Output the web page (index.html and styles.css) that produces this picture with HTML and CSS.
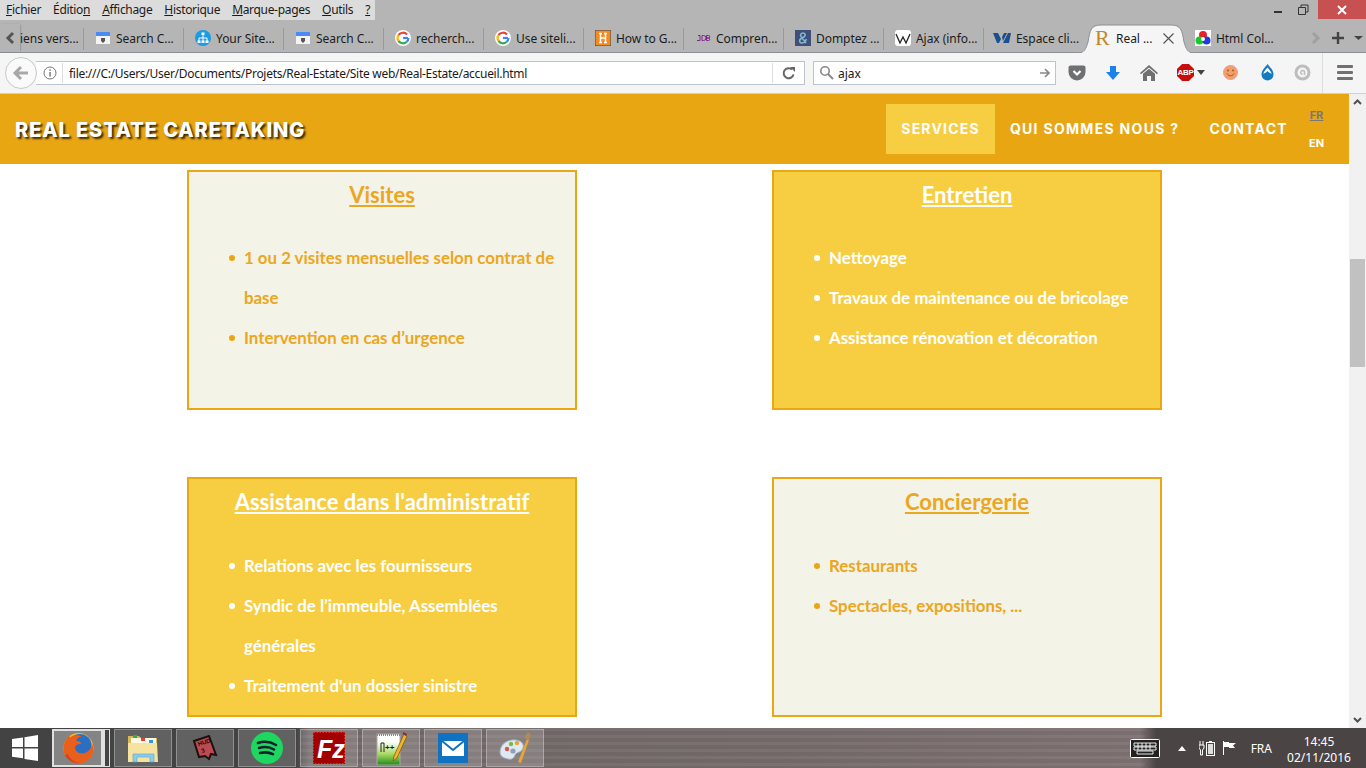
FILE: index.html
```html
<!DOCTYPE html>
<html lang="fr">
<head>
<meta charset="utf-8">
<title>Real Estate Caretaking</title>
<link rel="stylesheet" href="styles.css">
</head>
<body>
<div class="window">
  <div class="titlebar">
    <div class="menubar">
      <span><u>F</u>ichier</span><span>Éditio<u>n</u></span><span><u>A</u>ffichage</span><span><u>H</u>istorique</span><span><u>M</u>arque-pages</span><span><u>O</u>utils</span><span><u>?</u></span>
    </div>
    <div class="winctl">
      <svg class="ctl" width="20" height="20" viewBox="0 0 20 20"><rect x="6" y="11" width="8" height="2" fill="#333"/></svg>
      <svg class="ctl" width="20" height="20" viewBox="0 0 20 20"><path d="M5.500 7.500h7v7h-7zM8 7V5h7v7h-2" fill="none" stroke="#333" stroke-width="1"/></svg>
      <div class="close"><svg width="12" height="12" viewBox="0 0 12 12"><path d="M2 2l8 8M10 2l-8 8" stroke="#fff" stroke-width="2"/></svg></div>
    </div>
  </div>

  <div class="tabstrip">
    <svg class="tabarrow" width="20" height="28" viewBox="0 0 20 28"><path d="M13 9l-5 5 5 5" fill="none" stroke="#555" stroke-width="3"/></svg>
    <div class="tab first"><span>iens vers...</span></div>
    <div class="tab"><svg class="fav" viewBox="0 0 16 16"><rect x="1" y="2" width="14" height="12" fill="#f3f3f3"/><rect x="1" y="2" width="14" height="4" fill="#4a8af4"/><path d="M6 8v3l2 2 2-2V8" fill="#555"/></svg><span>Search C...</span></div>
    <div class="tab"><svg class="fav" viewBox="0 0 16 16"><rect width="16" height="16" rx="8" fill="#1a9be6"/><path d="M8 4v3M4 11V8h8v3M8 7v4" stroke="#fff" fill="none"/><rect x="6.500" y="2.500" width="3" height="2.500" fill="#fff"/><rect x="2.500" y="10.500" width="3" height="2.500" fill="#fff"/><rect x="6.500" y="10.500" width="3" height="2.500" fill="#fff"/><rect x="10.500" y="10.500" width="3" height="2.500" fill="#fff"/></svg><span>Your Site...</span></div>
    <div class="tab"><svg class="fav" viewBox="0 0 16 16"><rect x="1" y="2" width="14" height="12" fill="#f3f3f3"/><rect x="1" y="2" width="14" height="4" fill="#4a8af4"/><path d="M6 8v3l2 2 2-2V8" fill="#555"/></svg><span>Search C...</span></div>
    <div class="tab"><svg class="fav" viewBox="0 0 16 16"><circle cx="8" cy="8" r="8" fill="#fff"/><path d="M13 8H8" stroke="#4285f4" stroke-width="2.200"/><path d="M12 4.500A5.500 5.500 0 0 0 3.500 5" fill="none" stroke="#ea4335" stroke-width="2.200"/><path d="M3.500 5a5.500 5.500 0 0 0 0 6" fill="none" stroke="#fbbc05" stroke-width="2.200"/><path d="M3.500 11a5.500 5.500 0 0 0 8 1" fill="none" stroke="#34a853" stroke-width="2.200"/><path d="M11.500 12A5.500 5.500 0 0 0 13.500 8" fill="none" stroke="#4285f4" stroke-width="2.200"/></svg><span>recherch...</span></div>
    <div class="tab"><svg class="fav" viewBox="0 0 16 16"><circle cx="8" cy="8" r="8" fill="#fff"/><path d="M13 8H8" stroke="#4285f4" stroke-width="2.200"/><path d="M12 4.500A5.500 5.500 0 0 0 3.500 5" fill="none" stroke="#ea4335" stroke-width="2.200"/><path d="M3.500 5a5.500 5.500 0 0 0 0 6" fill="none" stroke="#fbbc05" stroke-width="2.200"/><path d="M3.500 11a5.500 5.500 0 0 0 8 1" fill="none" stroke="#34a853" stroke-width="2.200"/><path d="M11.500 12A5.500 5.500 0 0 0 13.500 8" fill="none" stroke="#4285f4" stroke-width="2.200"/></svg><span>Use siteli...</span></div>
    <div class="tab"><svg class="fav" viewBox="0 0 16 16"><rect width="16" height="16" fill="#f58a1f" stroke="#2b4a6b"/><path d="M4 3.500h3M9 3.500h3M5.500 3.500v9M10.500 3.500v9M4 12.500h3M9 12.500h3M5.500 8h5" stroke="#fff" stroke-width="1.500" fill="none"/></svg><span>How to G...</span></div>
    <div class="tab"><svg class="fav" viewBox="0 0 16 16"><path d="M3 5.500h2v5H2M7 5.500v5h1.500a2.500 2.500 0 0 0 0-5zM11.500 5.500v5h2a1.200 1.200 0 0 0 0-2.500h-2 2a1.200 1.200 0 0 0 0-2.500z" fill="none" stroke="#7a1a8c" stroke-width="0.900"/></svg><span>Compren...</span></div>
    <div class="tab"><svg class="fav" viewBox="0 0 16 16"><rect width="16" height="16" fill="#3e4f7c"/><path d="M11 13L6 6.500C5 5 6 3 8 3s3 2 1.500 3.500L5.500 9c-2 1.500-.5 4 1.500 4s3.500-1.500 4.500-4" fill="none" stroke="#86b6c9" stroke-width="1.600"/></svg><span>Domptez ...</span></div>
    <div class="tab"><svg class="fav" viewBox="0 0 16 16"><rect width="16" height="16" rx="3" fill="#fff"/><path d="M1 4l4 9 3-6 3 6 4-9" fill="none" stroke="#222" stroke-width="1.300"/></svg><span>Ajax (info...</span></div>
    <div class="tab short"><svg class="fav wide" viewBox="0 0 18 12"><path d="M0 1h5l3 6-2 4H4zM10 11l5-10h3l-2 10zM9 5l2-4h3l-4 8z" fill="#1c4f8f"/></svg><span>Espace cli...</span></div>
    <div class="tab active">
      <svg class="tabshape" viewBox="0 0 116 29"><path d="M0 29c6 0 8-4 10-11C12 6 13 1 23 1h70c10 0 11 5 13 17 2 7 4 11 10 11" fill="#f5f5f5" stroke="#8a8f96"/></svg>
      <span class="r">R</span><span class="atitle">Real ...</span>
      <svg class="x" width="11" height="11" viewBox="0 0 11 11"><path d="M.5.5l10 10M10.500.5l-10 10" stroke="#555" stroke-width="1.200"/></svg>
    </div>
    <div class="tab last"><svg class="fav" viewBox="0 0 16 16"><rect width="16" height="16" fill="#fff"/><circle cx="8" cy="5" r="4" fill="#e8212b"/><circle cx="4.500" cy="10.500" r="4" fill="#19c92c"/><circle cx="11.500" cy="10.500" r="4" fill="#2039e0"/><circle cx="8" cy="9" r="2" fill="#fff"/></svg><span>Html Col...</span></div>
    <div class="stripctl">
      <svg width="20" height="28" viewBox="0 0 20 28"><path d="M8 9l5 5-5 5" fill="none" stroke="#a0a0a0" stroke-width="3"/></svg>
      <svg width="26" height="28" viewBox="0 0 26 28"><path d="M13 8v12M7 14h12" stroke="#444" stroke-width="2.400"/></svg>
      <svg width="16" height="28" viewBox="0 0 16 28"><path d="M3 12h9l-4.500 4z" fill="#444"/></svg>
    </div>
  </div>

  <div class="toolbar">
    <div class="back"><svg width="18" height="18" viewBox="0 0 18 18"><path d="M9 3L3 9l6 6M3 9h13" fill="none" stroke="#a8a8a8" stroke-width="3"/></svg></div>
    <div class="urlbar">
      <svg class="info" width="14" height="14" viewBox="0 0 14 14"><circle cx="7" cy="7" r="6" fill="none" stroke="#777"/><rect x="6.300" y="6" width="1.500" height="4.500" fill="#777"/><rect x="6.300" y="3.300" width="1.500" height="1.500" fill="#777"/></svg>
      <span class="url">file:///C:/Users/User/Documents/Projets/Real-Estate/Site web/Real-Estate/accueil.html</span>
      <span class="reload"><svg width="14" height="14" viewBox="0 0 14 14"><path d="M11.500 8.500A5 5 0 1 1 10 3.500" fill="none" stroke="#666" stroke-width="2"/><path d="M8 1h5v5z" fill="#666"/></svg></span>
    </div>
    <div class="search">
      <svg width="16" height="16" viewBox="0 0 16 16"><circle cx="6" cy="6" r="4.200" fill="none" stroke="#888" stroke-width="1.600"/><path d="M9 9l5 5" stroke="#888" stroke-width="2"/></svg>
      <span class="query">ajax</span>
      <svg class="go" width="12" height="12" viewBox="0 0 12 12"><path d="M6 2l4 4-4 4M10 6H1" fill="none" stroke="#888" stroke-width="1.700"/></svg>
    </div>
    <div class="tools">
      <svg width="18" height="18" viewBox="0 0 18 18"><path d="M2.500 1.500h13a2 2 0 0 1 2 2V8a8.500 8.500 0 0 1-17 0V3.500a2 2 0 0 1 2-2z" fill="#6f7073"/><path d="M5.500 7L9 10.500 12.500 7" fill="none" stroke="#fff" stroke-width="2.200"/></svg>
      <svg width="16" height="16" viewBox="0 0 16 16"><path d="M5 1h6v6h4l-7 8-7-8h4z" fill="#1e81e8"/></svg>
      <svg width="18" height="16" viewBox="0 0 18 16"><path d="M9 0l9 8-1 1.200L9 2.500 1 9.200 0 8z" fill="#707070"/><path d="M9 3.800l6 5V16h-4v-5H7v5H3V8.800z" fill="#707070"/></svg>
      <div class="abp">
        <div class="abpicon">ABP</div>
        <svg width="8" height="5" viewBox="0 0 8 5"><path d="M0 0h8L4 5z" fill="#444"/></svg>
      </div>
      <svg width="15" height="15" viewBox="0 0 15 15"><circle cx="7.500" cy="7.500" r="7" fill="#f2a06a" stroke="#e89a9a"/><path d="M4 8.500c1.500 3 5.500 3 7 0" fill="none" stroke="#a84f1c"/><circle cx="5" cy="5.500" r=".9" fill="#a84f1c"/><circle cx="10" cy="5.500" r=".9" fill="#a84f1c"/></svg>
      <svg width="13" height="17" viewBox="0 0 13 17"><path d="M6.500 0c2 3 6 6 6 10.500a6 6 0 0 1-12 0C.5 6 4.500 3 6.500 0z" fill="#157bc1"/><path d="M6.500 3.500c-1 1.500-4 4-4 6.500 1-1 3-1.500 4-3 1 1.500 3 2 4 3 0-2.500-3-5-4-6.500z" fill="#fff"/></svg>
      <svg width="17" height="17" viewBox="0 0 17 17"><circle cx="8.500" cy="8.500" r="6.500" fill="none" stroke="#bdbdbd" stroke-width="3"/><path d="M10.500 11V7.500a2 2 0 1 0-2 3" fill="none" stroke="#bdbdbd" stroke-width="1.500"/></svg>
    </div>
    <div class="hamburger"><i></i><i></i><i></i></div>
  </div>

  <div class="viewport">
    <div class="page">
      <header class="header">
        <div class="logo">REAL ESTATE CARETAKING</div>
        <nav class="nav">
          <a class="link current">SERVICES</a>
          <a class="link">QUI SOMMES NOUS ?</a>
          <a class="link">CONTACT</a>
          <div class="langs"><a class="fr">FR</a><a class="en">EN</a></div>
        </nav>
      </header>
      <main class="cards">
        <section class="card cream">
          <h2>Visites</h2>
          <ul>
            <li>1 ou 2 visites mensuelles selon contrat de base</li>
            <li>Intervention en cas d’urgence</li>
          </ul>
        </section>
        <section class="card yellow">
          <h2>Entretien</h2>
          <ul>
            <li>Nettoyage</li>
            <li>Travaux de maintenance ou de bricolage</li>
            <li>Assistance rénovation et décoration</li>
          </ul>
        </section>
        <section class="card yellow">
          <h2>Assistance dans l'administratif</h2>
          <ul>
            <li>Relations avec les fournisseurs</li>
            <li>Syndic de l’immeuble, Assemblées générales</li>
            <li>Traitement d'un dossier sinistre</li>
          </ul>
        </section>
        <section class="card cream">
          <h2>Conciergerie</h2>
          <ul>
            <li>Restaurants</li>
            <li>Spectacles, expositions, ...</li>
          </ul>
        </section>
      </main>
    </div>
    <div class="scrollbar">
      <svg width="17" height="17" viewBox="0 0 17 17"><path d="M5 10l3.500-3.500L12 10" fill="none" stroke="#505050" stroke-width="2"/></svg>
      <div class="thumb"></div>
      <svg width="17" height="17" viewBox="0 0 17 17"><path d="M5 7l3.500 3.500L12 7" fill="none" stroke="#505050" stroke-width="2"/></svg>
    </div>
  </div>

  <footer class="taskbar">
    <div class="start"><svg width="26" height="26" viewBox="0 0 26 26"><path d="M0 4l11-1.500V12H0zM12.500 2.300L26 0v12H12.500zM0 13.500h11v9.800L0 21.800zM12.500 13.500H26V26l-13.500-2z" fill="#fff"/></svg></div>
    <div class="taskbtn open">
      <svg width="32" height="32" viewBox="0 0 32 32"><circle cx="16.500" cy="16" r="15" fill="#f7b52d"/><circle cx="18" cy="13.500" r="11.500" fill="#2a6fc4"/><path d="M7 4C3 8 1.500 12 1.500 17a15 15 0 0 0 29.500 3.500c.7-3.500.2-6.500-1-9 0 3.500-2 6.500-5 8.500-3.500 2.200-8.500 1.800-11-1.500-1.800-2.500-.8-5.200 1.500-6l4-1c-1-2-3-2.500-5-2.200C14 7 16.500 5 20 4.200 15 2.500 10 3 8.500 5.500z" fill="#e8601c"/><path d="M3 23c3 6 9 8.500 15 8-5-.5-10-3.500-12-9z" fill="#d9411e"/></svg>
    </div>
    <div class="stack"></div>
    <div class="taskbtn">
      <svg width="32" height="32" viewBox="0 0 32 32"><path d="M1 4h11l2 2h16v24H1z" fill="#d9b858"/><path d="M4 6h25v5H4z" fill="#fff8e0"/><rect x="6" y="3" width="4" height="3" fill="#2cb04a"/><rect x="14" y="6" width="4" height="3" fill="#d8453a"/><rect x="22" y="8" width="4" height="3" fill="#2a9bd8"/><path d="M1 11h29l1 19H1z" fill="#f6e3a0"/><path d="M6 22h21v8h-4v-5H10v5H6z" fill="#8ccbea" stroke="#5aa5cf" stroke-width=".6"/></svg>
    </div>
    <div class="taskbtn">
      <svg width="26" height="26" viewBox="0 0 26 26"><path d="M2 6l15-5 3 8 4 11-5-1-2 5-4-3-6 1z" fill="#bd4a50" stroke="#1c1010" stroke-width="2"/><text x="6.500" y="11" class="svgtext" font-size="6" transform="rotate(-17 6.500 11)">HUD</text><text x="10" y="18" class="svgtext" font-size="6" transform="rotate(-17 10 18)">3</text></svg>
    </div>
    <div class="taskbtn"><svg width="32" height="32" viewBox="0 0 32 32"><circle cx="16" cy="16" r="16" fill="#1ed760"/><path d="M7 11c6-2 13-1 18 2M8 16c5-1.500 11-1 15 1.500M9 21c4-1 9-.8 13 1.200" fill="none" stroke="#15212a" stroke-width="2.600" stroke-linecap="round"/></svg></div>
    <div class="taskbtn"><svg width="32" height="32" viewBox="0 0 32 32"><rect width="32" height="32" fill="#a30000"/><rect x=".5" y=".5" width="31" height="31" fill="none" stroke="#e03030" stroke-dasharray="1.500 1.500"/><text x="4" y="26" class="fz">Fz</text></svg></div>
    <div class="taskbtn"><svg width="34" height="34" viewBox="0 0 34 34"><defs><linearGradient id="npp" x1="0" y1="0" x2="0" y2="1"><stop offset=".25" stop-color="#fff"/><stop offset=".65" stop-color="#a8d860"/><stop offset="1" stop-color="#1f8a1a"/></linearGradient></defs><rect x="3" y="3" width="23" height="31" fill="url(#npp)" stroke="#aaa"/><path d="M3 4h23" stroke="#888" stroke-dasharray="1 1" stroke-width="2"/><path d="M7 21V12h3v9" fill="none" stroke="#222"/><text x="11" y="19" class="npp">++</text><path d="M30 3l3 2-10 22-4 3 1-5z" fill="#f0b429" stroke="#7a5010" stroke-width=".7"/><path d="M29 1l4 2-1 2-3-2z" fill="#8c2a2a"/></svg></div>
    <div class="taskbtn"><svg width="30" height="30" viewBox="0 0 30 30"><rect width="30" height="30" fill="#0f72c2"/><path d="M4 8h22v15H4z" fill="#fff"/><path d="M4 8l11 9 11-9" fill="none" stroke="#0f72c2" stroke-width="2"/></svg></div>
    <div class="taskbtn"><svg width="34" height="34" viewBox="0 0 34 34"><path d="M2 21c0-8 8-13 16-12 7 1 9 6 6 10-2 3-6 2-7 5s-3 5-7 4c-5-1-8-3-8-7z" fill="#dfe9f1" stroke="#9db1c4"/><circle cx="9" cy="18" r="2.200" fill="#e0534d"/><circle cx="13" cy="13" r="2.200" fill="#7dbb42"/><circle cx="19" cy="12" r="2.200" fill="#e8a53a"/><circle cx="15" cy="20" r="2.600" fill="#8ba3bb"/><path d="M20 31L29 8l2 1-8 23z" fill="#e8a53a"/><path d="M26 7l4-6 3 3-2 5z" fill="#b08a5a"/></svg></div>
    <div class="tray">
      <svg class="kbd" width="30" height="19" viewBox="0 0 30 19"><rect x="0.500" y="0.500" width="29" height="18" rx="1" fill="#222" stroke="#fff"/><path d="M4 4h22v3H4zM4 8h22v3H4zM7 12h16v3H7z" fill="none" stroke="#fff" stroke-width="0.900"/><path d="M8 4v7M12 4v7M16 4v7M20 4v7" stroke="#fff" stroke-width="0.900"/></svg>
      <svg class="up" width="8" height="5" viewBox="0 0 8 5"><path d="M4 0l4 5H0z" fill="#fff"/></svg>
      <svg class="power" width="16" height="16" viewBox="0 0 16 16"><path d="M1 1v4M4 1v4M0 5h5v3L3.500 10v5h-2v-5L0 8z" fill="none" stroke="#fff"/><rect x="7.500" y="2.500" width="8" height="13" fill="none" stroke="#fff"/><rect x="10" y="1" width="3" height="1.500" fill="#fff"/><rect x="9" y="4" width="5" height="10" fill="#ddd"/></svg>
      <svg class="flag" width="16" height="16" viewBox="0 0 16 16"><path d="M1.500 1v14" stroke="#fff"/><path d="M2 2h5v1h7l-3 2.500L13 8H7V7H2z" fill="#fff"/></svg>
      <span class="lang">FRA</span>
      <div class="clock"><span>14:45</span><span>02/11/2016</span></div>
    </div>
  </footer>
</div>
</body>
</html>
```
FILE: styles.css
```css
* { box-sizing: border-box; }
html, body { margin: 0; height: 100%; overflow: hidden; }
body { font-family: "Open Sans", "Noto Sans", sans-serif; background: #fff; }
.window { width: 1366px; height: 768px; display: flex; flex-direction: column; overflow: hidden; }

.titlebar { height: 24px; background: #b5b5b5; display: flex; justify-content: space-between; flex: none; }
.menubar { width: 375px; height: 20px; background: #dcdcdc; display: flex; padding-left: 6px; gap: 12px; font-size: 12px; line-height: 20px; color: #1a1a1a; font-family: "Noto Sans", sans-serif; white-space: nowrap; letter-spacing: -0.32px; }
.winctl { display: flex; align-items: flex-start; }
.ctl { margin-right: 5px; }
.close { width: 48px; height: 19px; background: #c75050; display: flex; align-items: center; justify-content: center; }

.tabstrip { height: 29px; flex: none; display: flex; background: #b5b5b5; border-bottom: 1px solid #8a8f96; font-size: 12px; color: #1c1c1c; font-family: "Noto Sans", sans-serif; white-space: nowrap; }
.tabarrow { flex: none; box-shadow: 1px 0 2px -1px #666; }
.tab { width: 100px; height: 28px; flex: none; display: flex; align-items: center; gap: 5px; padding-left: 11px; position: relative; letter-spacing: -0.05px; }
.tab::after { content: ""; position: absolute; right: 0; top: 4px; height: 22px; width: 1px; background: #999; }
.tab.first { width: 64px; padding-left: 0; overflow: hidden; }
.tab.short { width: 94px; padding-left: 9px; }
.tab.short::after { display: none; }
.tab.active { width: 116px; margin-right: -1px; padding-left: 17px; gap: 4px; }
.tab.active::after, .tab.last::after { display: none; }
.tab.last { width: 112px; padding-left: 2px; }
.tabshape { position: absolute; left: 0; top: 0; width: 116px; height: 29px; }
.fav { width: 16px; height: 16px; flex: none; }
.fav.wide { width: 18px; }
.r, .atitle, .x { position: relative; }
.r { font-family: "Liberation Serif", serif; font-size: 22px; color: #c4882b; width: 17px; line-height: 28px; }
.atitle { width: 43px; }
.x { flex: none; }
.stripctl { display: flex; margin-left: auto; padding-right: 7px; }

.toolbar { height: 41px; flex: none; background: #f5f5f5; border-bottom: 1px solid #d0d0d0; display: flex; align-items: center; padding: 0 0 1px 5px; }
.back { width: 32px; height: 32px; flex: none; border-radius: 50%; background: #fafafa; border: 1px solid #c8c8c8; display: flex; align-items: center; justify-content: center; z-index: 1; }
.urlbar { width: 769px; height: 24px; margin-left: -1px; background: #fff; border: 1px solid #bfc3cf; border-left: none; display: flex; align-items: center; padding-left: 7px; font-size: 12px; color: #1a1a1a; font-family: "Noto Sans", sans-serif; }
.info { flex: none; }
.url { margin-left: 5px; padding: 1px 0 0 6px; border-left: 1px solid #ddd; line-height: 19px; flex: 1; white-space: nowrap; letter-spacing: -0.29px; }
.reload { width: 32px; height: 20px; border-left: 1px solid #ddd; display: flex; align-items: center; justify-content: center; flex: none; }
.search { width: 243px; height: 24px; margin-left: 8px; background: #fff; border: 1px solid #bfc3cf; display: flex; align-items: center; padding: 0 4px 0 5px; font-size: 12px; font-family: "Noto Sans", sans-serif; color: #1a1a1a; }
.query { margin-left: 3px; flex: 1; padding-top: 1px; }
.tools { width: 267px; display: flex; align-items: center; padding-left: 12px; flex: none; }
.tools > svg { flex: none; }
.tools > svg:nth-child(1) { margin-right: 19px; }
.tools > svg:nth-child(2) { margin-right: 19px; }
.tools > svg:nth-child(3) { margin-right: 19px; }
.tools > svg:nth-child(5) { margin-right: 23px; }
.tools > svg:nth-child(6) { margin-right: 20px; }
.abp { display: flex; align-items: center; gap: 3px; margin-right: 18px; }
.abpicon { width: 17px; height: 17px; background: #c70d0d; color: #fff; font: 700 8px/17px "Liberation Sans", sans-serif; text-align: center; letter-spacing: -0.3px; clip-path: polygon(30% 0, 70% 0, 100% 30%, 100% 70%, 70% 100%, 30% 100%, 0 70%, 0 30%); }
.hamburger { width: 43px; height: 40px; border-left: 1px solid #ddd; flex: none; display: flex; flex-direction: column; gap: 3px; align-items: center; justify-content: center; padding-left: 1px; margin-left: -1px; }
.hamburger i { display: block; width: 16px; height: 3px; background: #707070; border-radius: 1px; }

.viewport { height: 634px; flex: none; display: flex; overflow: hidden; }
.page { flex: 1; min-width: 0; background: #fff; overflow: hidden; }
.header { height: 70px; background: #e9a613; display: flex; align-items: center; justify-content: space-between; padding-left: 15px; }
.logo { font: 800 20px/24px Inter, "Liberation Sans", sans-serif; color: #fff; text-shadow: 2px 2px 2px #3a2a00; letter-spacing: 0.9px; margin-top: 1px; }
.nav { display: flex; align-items: center; height: 50px; padding-right: 24px; }
.link { font: 700 14px/50px Inter, "Liberation Sans", sans-serif; color: #fff; padding: 0 15px; letter-spacing: 1.3px; white-space: nowrap; }
.link.current { background: #f7ce42; letter-spacing: 1.2px; }
.langs { display: flex; flex-direction: column; align-items: center; margin-left: 5px; width: 17px; gap: 14px; font: 700 11px/14px Inter, "Liberation Sans", sans-serif; }
.fr { color: #777; text-decoration: underline; }
.en { color: #fff; }

.cards { display: grid; grid-template-columns: 390px 390px; grid-auto-rows: 240px; column-gap: 195px; row-gap: 67px; padding: 6px 0 0 187px; font-family: Lato, "Liberation Sans", sans-serif; }
.card { border: 2px solid #eba613; }
.cream { background: #f3f3e7; color: #eba622; }
.yellow { background: #f7ce42; color: #fff; }
.card h2 { margin: 0 0 20px; font-size: 22px; font-weight: 700; line-height: 46px; text-align: center; text-decoration: underline; }
.card ul { margin: 0; padding: 0 15px 0 55px; list-style: none; }
.card:nth-child(n+3) ul { padding-top: 1px; }
.card li { font-size: 16.85px; font-weight: 700; line-height: 40px; position: relative; }
.card li::before { content: ""; position: absolute; left: -15px; top: 17px; width: 6px; height: 6px; border-radius: 50%; background: currentColor; }
.cream li::before { background: #eba613; }

.scrollbar { width: 17px; flex: none; background: #f1f1f1; display: flex; flex-direction: column; }
.thumb { width: 15px; height: 108px; margin: 148px 0 344px 1px; background: #c1c1c1; }

.taskbar { height: 40px; flex: none; display: flex; align-items: center; gap: 4px; color: #fff; background: repeating-linear-gradient(180deg, rgba(255,255,255,.04) 0 3px, rgba(0,0,0,.03) 3px 7px) 300px 0 / 845px 100% no-repeat, linear-gradient(90deg, #434343 0, #434343 296px, #716767 310px, #766b6b 800px, #7f7272 1140px, #4a4544 1156px, #4a4544 100%); }
.start { width: 48px; height: 38px; display: flex; align-items: center; justify-content: center; flex: none; padding-left: 2px; }
.taskbtn { width: 58px; height: 38px; flex: none; border: 1px solid rgba(255,255,255,.3); background: rgba(255,255,255,.16); display: flex; align-items: center; justify-content: center; }
.taskbtn.open { width: 51px; border: 2px solid #e0e0e0; background: rgba(255,255,255,.35); margin-right: -4px; }
.stack { width: 7px; height: 38px; flex: none; border: 1px solid #e0e0e0; border-left-width: 2px; }
.svgtext { font-family: "Liberation Sans", sans-serif; fill: #111; font-weight: 700; }
.fz { font: italic 700 25px "Liberation Sans", sans-serif; fill: #fff; }
.npp { font: 700 8px "Liberation Sans", sans-serif; fill: #222; }
.tray { margin-left: auto; height: 40px; display: flex; align-items: center; padding-right: 17px; font-family: "Noto Sans", sans-serif; font-size: 12px; }
.kbd { margin-right: 18px; }
.up { margin-right: 13px; }
.power { margin-right: 7px; }
.flag { margin-right: 13px; }
.lang { margin-right: 17px; margin-top: 1px; }
.clock { display: flex; flex-direction: column; align-items: center; line-height: 16px; width: 60px; margin-top: 3px; }
```
